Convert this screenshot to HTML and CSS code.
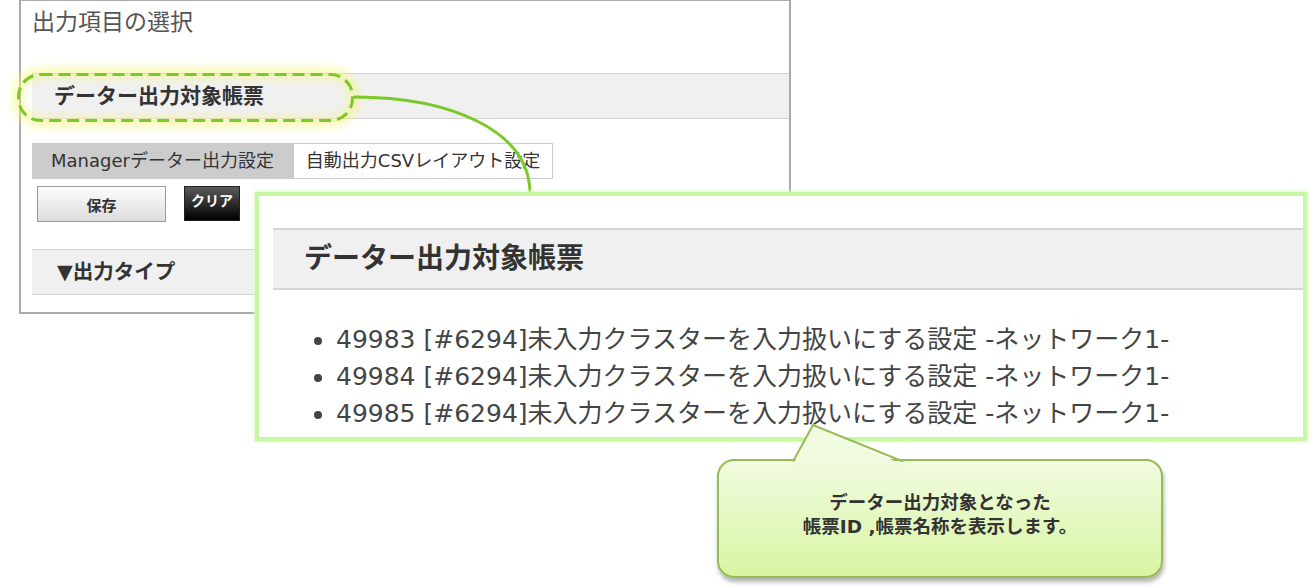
FILE: index.html
```html
<!DOCTYPE html>
<html lang="ja">
<head>
	<meta charset="UTF-8">
	<title>出力項目の選択</title>
	<link rel="stylesheet" href="styles.css">
</head>
<body>
	<main class="panel">
		<h1 class="title">出力項目の選択</h1>
		<div class="bar">データー出力対象帳票</div>
		<nav class="tabs">
			<div class="tab active">Managerデーター出力設定</div>
			<div class="tab">自動出力CSVレイアウト設定</div>
		</nav>
		<div class="buttons">
			<button class="btn save">保存</button>
			<button class="btn clear">クリア</button>
		</div>
		<div class="bar type">▼出力タイプ</div>
	</main>

	<!-- highlight + connector -->
	<svg class="marks" width="1314" height="588" viewBox="0 0 1314 588">
		<defs>
			<filter id="glow" x="-20%" y="-60%" width="140%" height="220%">
				<feGaussianBlur stdDeviation="4"/>
			</filter>
		</defs>
		<rect x="17" y="73" width="337" height="49" rx="24" fill="none" stroke="#f6f77a" stroke-width="10" opacity=".6" filter="url(#glow)"/>
		<rect x="18.5" y="74.5" width="334" height="46" rx="22" fill="none" stroke="#7cc92b" stroke-width="3" stroke-dasharray="12 6"/>
		<path d="M354,97 C450,97 530,130 530,194" fill="none" stroke="#7cc92b" stroke-width="3"/>
	</svg>

	<section class="zoom">
		<div class="zoom-bar">データー出力対象帳票</div>
		<ul class="list">
			<li>49983 [#6294]未入力クラスターを入力扱いにする設定 -ネットワーク1-</li>
			<li>49984 [#6294]未入力クラスターを入力扱いにする設定 -ネットワーク1-</li>
			<li>49985 [#6294]未入力クラスターを入力扱いにする設定 -ネットワーク1-</li>
		</ul>
	</section>

	<div class="callout">
		<svg class="pointer" width="120" height="42" viewBox="0 0 120 42">
			<polygon points="4,42 24,2 114,42" fill="#f1fbe0"/>
			<polyline points="4,38.5 24,2 114,38.5" fill="none" stroke="#98bc55" stroke-width="2"/>
		</svg>
		<p>データー出力対象となった<br>帳票ID ,帳票名称を表示します。</p>
	</div>
</body>
</html>
```

FILE: styles.css
```css
/* base */
body {
	background-color: #fff;
	color: #333;
	font-family: "DejaVu Sans", "Noto Sans CJK JP", sans-serif;
	margin: 0px;
	width: 1314px;
	height: 588px;
	position: relative;
	overflow: hidden;
}

/* main.panel */
main.panel {
	border: 2px solid #aaa;
	border-top-width: 1px;
	box-sizing: border-box;
	height: 314px;
	margin-left: 19px;
	width: 772px;
}
main.panel h1.title {
	color: #555;
	font-size: 23px;
	font-weight: normal;
	height: 72px;
	line-height: 42px;
	margin: 0px;
	padding-left: 11px;
}
main.panel div.bar {
	background-color: #f0f0f0;
	border-top: 1px solid #d2d2d2;
	border-bottom: 1px solid #d2d2d2;
	font-size: 21px;
	font-weight: bold;
	height: 44px;
	line-height: 44px;
	margin-left: 11px;
	padding-left: 22px;
}
main.panel div.bar.type {
	font-size: 20.5px;
	margin-top: 27px;
	padding-left: 25px;
}
main.panel nav.tabs {
	display: flex;
	height: 36px;
	margin: 24px 0px 0px 11px;
}
nav.tabs div.tab {
	background-color: #fff;
	border: 1px solid #ccc;
	box-sizing: border-box;
	font-size: 18px;
	line-height: 34px;
	text-align: center;
	white-space: nowrap;
	width: 260px;
}
nav.tabs div.tab.active {
	background-color: #ccc;
	width: 261px;
}
main.panel div.buttons {
	align-items: flex-start;
	display: flex;
	gap: 18px;
	margin: 7px 0px 0px 16px;
}
div.buttons button.btn {
	font-family: inherit;
	font-weight: bold;
	padding: 0px;
}
div.buttons button.save {
	background: linear-gradient(#fdfdfd, #dcdcdc);
	border: 1px solid #999;
	color: #333;
	font-size: 15px;
	height: 36px;
	width: 129px;
}
div.buttons button.clear {
	background: linear-gradient(#5a5a5a, #000);
	border: 1px solid #222;
	color: #fff;
	display: flex;
	font-size: 14px;
	height: 35px;
	justify-content: center;
	line-height: 28px;
	width: 56px;
}

/* svg marks */
svg.marks {
	left: 0px;
	pointer-events: none;
	position: absolute;
	top: 0px;
}

/* section.zoom */
section.zoom {
	background-color: #fff;
	border: 4px solid #c8f7a4;
	box-shadow: 0px 0px 3px 1px #dcfcc6;
	box-sizing: border-box;
	height: 249px;
	left: 255px;
	position: absolute;
	top: 192px;
	width: 1052px;
}
section.zoom div.zoom-bar {
	background-color: #f0f0f0;
	border-top: 2px solid #d6d6d6;
	border-bottom: 2px solid #d6d6d6;
	font-size: 28px;
	font-weight: bold;
	height: 58px;
	line-height: 58px;
	margin: 32px 0px 0px 14px;
	padding-left: 31px;
}
section.zoom ul.list {
	color: #444;
	font-size: 25px;
	line-height: 37px;
	margin: 31px 0px 0px 0px;
	padding-left: 77px;
	white-space: nowrap;
}

/* callout */
div.callout {
	background: linear-gradient(#f1fbe0, #d8f5a2);
	border: 2px solid #98bc55;
	border-radius: 17px;
	box-shadow: 1px 4px 4px rgba(0,0,0,.3);
	box-sizing: border-box;
	height: 119px;
	left: 717px;
	position: absolute;
	top: 459px;
	width: 446px;
}
div.callout svg.pointer {
	left: 70px;
	position: absolute;
	top: -38px;
}
div.callout p {
	font-size: 18.5px;
	font-weight: bold;
	line-height: 24px;
	margin: 30px 0px 0px 0px;
	text-align: center;
}
```
